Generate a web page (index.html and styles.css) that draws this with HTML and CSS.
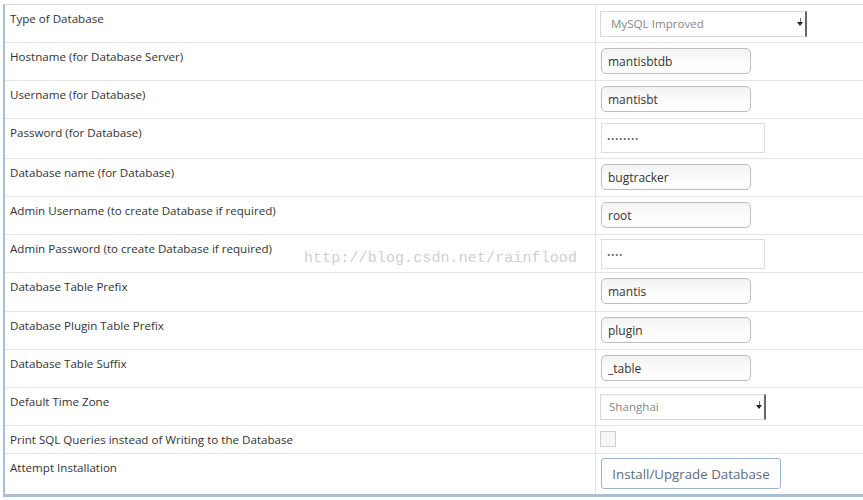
FILE: index.html
```html
<!DOCTYPE html>
<html lang="en">
<head>
  <meta charset="UTF-8">
  <title>MantisBT - Installation</title>
  <link rel="stylesheet" href="styles.css">
</head>
<body>
  <div class="install-box">
    <div class="row">
      <div class="label">Type of Database</div>
      <div class="field field-select">
        <div class="select select-db"><span>MySQL Improved</span><span class="arrow"></span></div>
      </div>
    </div>
    <div class="row">
      <div class="label">Hostname (for Database Server)</div>
      <div class="field"><input class="text" type="text" value="mantisbtdb"></div>
    </div>
    <div class="row">
      <div class="label">Username (for Database)</div>
      <div class="field"><input class="text" type="text" value="mantisbt"></div>
    </div>
    <div class="row row-tall">
      <div class="label">Password (for Database)</div>
      <div class="field field-pass"><div class="pass">••••••••</div></div>
    </div>
    <div class="row">
      <div class="label">Database name (for Database)</div>
      <div class="field"><input class="text" type="text" value="bugtracker"></div>
    </div>
    <div class="row">
      <div class="label">Admin Username (to create Database if required)</div>
      <div class="field"><input class="text" type="text" value="root"></div>
    </div>
    <div class="row">
      <div class="label">Admin Password (to create Database if required)</div>
      <div class="field field-pass"><div class="pass">••••</div></div>
    </div>
    <div class="row row-mid">
      <div class="label">Database Table Prefix</div>
      <div class="field"><input class="text" type="text" value="mantis"></div>
    </div>
    <div class="row">
      <div class="label">Database Plugin Table Prefix</div>
      <div class="field"><input class="text" type="text" value="plugin"></div>
    </div>
    <div class="row">
      <div class="label">Database Table Suffix</div>
      <div class="field"><input class="text" type="text" value="_table"></div>
    </div>
    <div class="row">
      <div class="label">Default Time Zone</div>
      <div class="field field-select">
        <div class="select select-tz"><span>Shanghai</span><span class="arrow"></span></div>
      </div>
    </div>
    <div class="row row-short">
      <div class="label">Print SQL Queries instead of Writing to the Database</div>
      <div class="field field-check"><span class="checkbox"></span></div>
    </div>
    <div class="row row-tall row-last">
      <div class="label">Attempt Installation</div>
      <div class="field field-button"><button class="btn">Install/Upgrade Database</button></div>
    </div>

    <div class="watermark">http://blog.csdn.net/rainflood</div>
  </div>
</body>
</html>
```

FILE: styles.css
```css
body {
  margin: 0;
  font-family: "Open Sans", Arial, sans-serif;
  font-size: 11.6px;
  color: #333;
  background: #fff;
  overflow: hidden;
}
.install-box {
  position: relative;
  margin: 4px 0 0 3px;
  width: 900px;
  border-top: 1px solid #dcdcdc;
  border-left: 2px solid #a9bfd5;
  border-bottom: 3px solid #a9bfd5;
}
.row {
  display: flex;
  box-sizing: border-box;
  height: 38px;
  border-bottom: 1px solid #e4e4e4;
}
.row-tall {
  height: 40px;
}
.row-mid {
  height: 39px;
}
.row-short {
  height: 28px;
}
.row-last {
  border-bottom: none;
}
.label {
  box-sizing: border-box;
  width: 591px;
  flex-shrink: 0;
  padding: 5px 5px;
  line-height: 18px;
  border-right: 1px solid #e4e4e4;
}
.field {
  padding: 5px 0 0 5px;
}
.field-select {
  padding: 6px 0 0 4px;
}
.field-pass {
  padding-top: 4px;
}
.field-check {
  padding: 5px 0 0 4px;
}
.field-button {
  padding: 4px 0 0 5px;
}
.text {
  box-sizing: border-box;
  width: 150px;
  height: 26px;
  margin: 0;
  padding: 0 6px;
  font-family: "Open Sans", Arial, sans-serif;
  font-size: 12px;
  color: #333;
  border: 1px solid #bdbdbd;
  border-radius: 5px;
  background: linear-gradient(to bottom, #f2f2f2, #fdfdfd 60%);
  outline: none;
}
.pass {
  box-sizing: border-box;
  width: 164px;
  height: 30px;
  padding: 0 5px;
  border: 1px solid #dcdcdc;
  font-size: 9px;
  line-height: 29px;
  letter-spacing: 0.6px;
  color: #666;
}
.select {
  box-sizing: border-box;
  position: relative;
  height: 26px;
  padding: 0 10px;
  border: 1px solid #dadada;
  border-right: 2px solid #666;
  line-height: 24px;
  color: #888;
  box-shadow: inset 0 0 2px #eee;
}
.select-db {
  width: 207px;
}
.select-tz {
  width: 166px;
  padding-left: 8px;
}
.arrow {
  position: absolute;
  right: 2px;
  top: 10px;
  border-left: 3px solid transparent;
  border-right: 3px solid transparent;
  border-top: 4px solid #222;
}
.arrow::before {
  content: "";
  position: absolute;
  left: 0;
  top: -8px;
  width: 1px;
  height: 4px;
  background: #777;
}
.checkbox {
  display: block;
  width: 14px;
  height: 14px;
  border: 1px solid #d0d0d0;
  background: #f7f7f7;
}
.btn {
  box-sizing: border-box;
  width: 180px;
  height: 31px;
  padding: 0;
  font-family: "Open Sans", Arial, sans-serif;
  font-size: 13.3px;
  color: #5b6b7f;
  background: #fff;
  border: 1px solid #9cb6cf;
  border-radius: 3px;
}
.watermark {
  position: absolute;
  left: 299px;
  top: 245px;
  font-family: "Liberation Mono", "DejaVu Sans Mono", monospace;
  font-size: 15px;
  color: #cfcfcf;
  letter-spacing: 0.1px;
}
```
